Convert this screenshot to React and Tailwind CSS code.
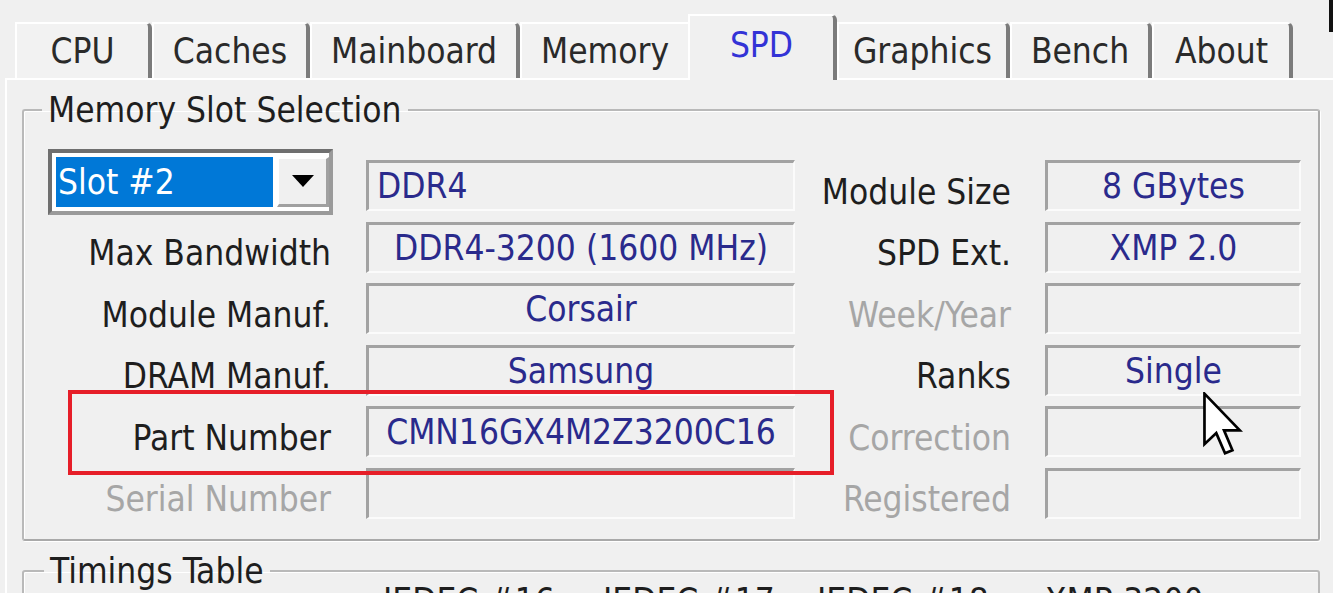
import React from "react";

const TABS = [
  { label: "CPU", w: "w-[137px]" },
  { label: "Caches", w: "w-[158px]" },
  { label: "Mainboard", w: "w-[210px]" },
  { label: "Memory", w: "w-[168px]", noEdge: true },
  { label: "SPD", w: "w-[149px]", active: true },
  { label: "Graphics", w: "w-[173px]" },
  { label: "Bench", w: "w-[142px]" },
  { label: "About", w: "w-[141px]" },
];

function Tab({ t }) {
  if (t.active) {
    return (
      <div
        className={`${t.w} h-[66px] -mb-[2px] relative z-10 flex items-center justify-center pb-[6px] bg-[#f0f0f0] border-t-2 border-l-2 border-white border-r-4 border-r-[#7b7b7b] rounded-tr-[6px] text-[#3333d6]`}
      >
        {t.label}
      </div>
    );
  }
  return (
    <div
      className={`${t.w} h-[56px] flex items-center justify-center bg-[#f2f2f2] border-t-2 border-l-2 border-white ${
        t.noEdge ? "" : "border-r-4 border-r-[#7b7b7b] rounded-tr-[6px]"
      } text-[#2a2a2a]`}
    >
      {t.label}
    </div>
  );
}

function Field({ value, left }) {
  return (
    <div
      className={`h-[51px] flex items-center whitespace-nowrap border-t-[3px] border-l-[3px] border-[#a2a2a2] border-b-2 border-r-2 border-b-[#fbfbfb] border-r-[#fbfbfb] bg-[#f0f0f0] text-[#2a2a8c] ${
        left ? "justify-start pl-[8px]" : "justify-center"
      }`}
    >
      {value}
    </div>
  );
}

function Label({ text, gray }) {
  return (
    <div
      className={`h-[51px] flex items-center justify-end pt-[12px] pr-[2px] whitespace-nowrap ${
        gray ? "text-[#a6a6a6]" : "text-[#1e1e1e]"
      }`}
    >
      {text}
    </div>
  );
}

function Combo() {
  return (
    <div className="h-[51px] flex items-center">
      <div className="w-[285px] h-[66px] -mt-[8px] flex items-stretch border-[4px] border-t-[#6f6f6f] border-l-[#6f6f6f] border-b-[#9a9a9a] border-r-[#9a9a9a] bg-white p-[4px] pr-[0px]">
        <div className="flex-1 bg-[#0078d7] text-white flex items-center pl-[2px]">
          Slot #2
        </div>
        <div className="w-[52px] ml-[4px] bg-[#f0f0f0] border-t-2 border-l-2 border-white border-b-[3px] border-r-[3px] border-b-[#a0a0a0] border-r-[#a0a0a0] flex items-center justify-center">
          <svg width="22" height="12" viewBox="0 0 22 12">
            <path d="M0 0 L22 0 L11 12 Z" fill="#000" />
          </svg>
        </div>
      </div>
    </div>
  );
}

const ROWS = [
  { l: null, v: "DDR4", left: true, rl: "Module Size", rv: "8 GBytes" },
  { l: "Max Bandwidth", v: "DDR4-3200 (1600 MHz)", rl: "SPD Ext.", rv: "XMP 2.0" },
  { l: "Module Manuf.", v: "Corsair", rl: "Week/Year", rg: true, rv: "" },
  { l: "DRAM Manuf.", v: "Samsung", rl: "Ranks", rv: "Single" },
  { l: "Part Number", v: "CMN16GX4M2Z3200C16", rl: "Correction", rg: true, rv: "" },
  { l: "Serial Number", lg: true, v: "", rl: "Registered", rg: true, rv: "" },
];

export default function App() {
  return (
    <div className="relative w-[1333px] h-[593px] overflow-hidden bg-[#f0f0f0] font-['DejaVu_Sans_Condensed','DejaVu_Sans',sans-serif] text-[35px] leading-[40px]">
      {/* tab strip */}
      <div className="flex items-end h-[78px] pl-[15px]">
        {TABS.map((t) => (
          <Tab key={t.label} t={t} />
        ))}
      </div>

      {/* tab page */}
      <div className="ml-[5px] border-t-2 border-l-2 border-white pt-[10px] pl-[15px] pr-[13px]">
        <fieldset className="border-2 border-t-[#b9b9b9] border-l-[#b9b9b9] border-b-[#a9a9a9] border-r-[#a9a9a9] rounded-[3px] pl-[24px] pt-[30px] pb-[20px] shadow-[inset_1px_1px_0_#ffffff,1px_1px_0_#ffffff]">
          <legend className="-ml-[6px] px-[6px] text-[#1e1e1e]">Memory Slot Selection</legend>
          <div className="grid grid-cols-[285px_462px_218px_288px] gap-y-[10.5px]">
            {ROWS.map((r, i) => (
              <React.Fragment key={i}>
                {r.l === null ? <Combo /> : <Label text={r.l} gray={r.lg} />}
                <div className="pl-[33px]">
                  <Field value={r.v} left={r.left} />
                </div>
                <Label text={r.rl} gray={r.rg} />
                <div className="pl-[32px]">
                  <Field value={r.rv} />
                </div>
              </React.Fragment>
            ))}
          </div>
        </fieldset>

        <fieldset className="mt-[10px] border-2 border-[#b9b9b9] rounded-[3px] pl-[24px] h-[120px] shadow-[inset_1px_1px_0_#ffffff]">
          <legend className="-ml-[4px] px-[6px] text-[#1e1e1e]">Timings Table</legend>
          <div className="flex -mt-[10px] text-[#1e1e1e]">
            <div className="w-[335px]" />
            <div className="w-[220px]">JEDEC #16</div>
            <div className="w-[214px]">JEDEC #17</div>
            <div className="w-[228px]">JEDEC #18</div>
            <div>XMP-3200</div>
          </div>
        </fieldset>
      </div>

      {/* red highlight box */}
      <div className="absolute left-[68px] top-[390px] w-[766px] h-[85px] border-[4px] border-[#e61e28]" />

      {/* mouse cursor */}
      <svg
        className="absolute left-[1201px] top-[392px]"
        width="44"
        height="64"
        viewBox="0 0 12 19"
      >
        <path
          d="M0.5 0.5 L0.5 15.5 L4 12.2 L6.6 18.2 L8.8 17.3 L6.3 11.4 L11 11.4 Z"
          fill="#ffffff"
          stroke="#000000"
          strokeWidth="0.8"
          strokeLinejoin="miter"
        />
      </svg>

      {/* dark corner piece top-right */}
      <div className="absolute right-0 top-0 w-[4px] h-[32px] bg-[#111]" />
    </div>
  );
}
